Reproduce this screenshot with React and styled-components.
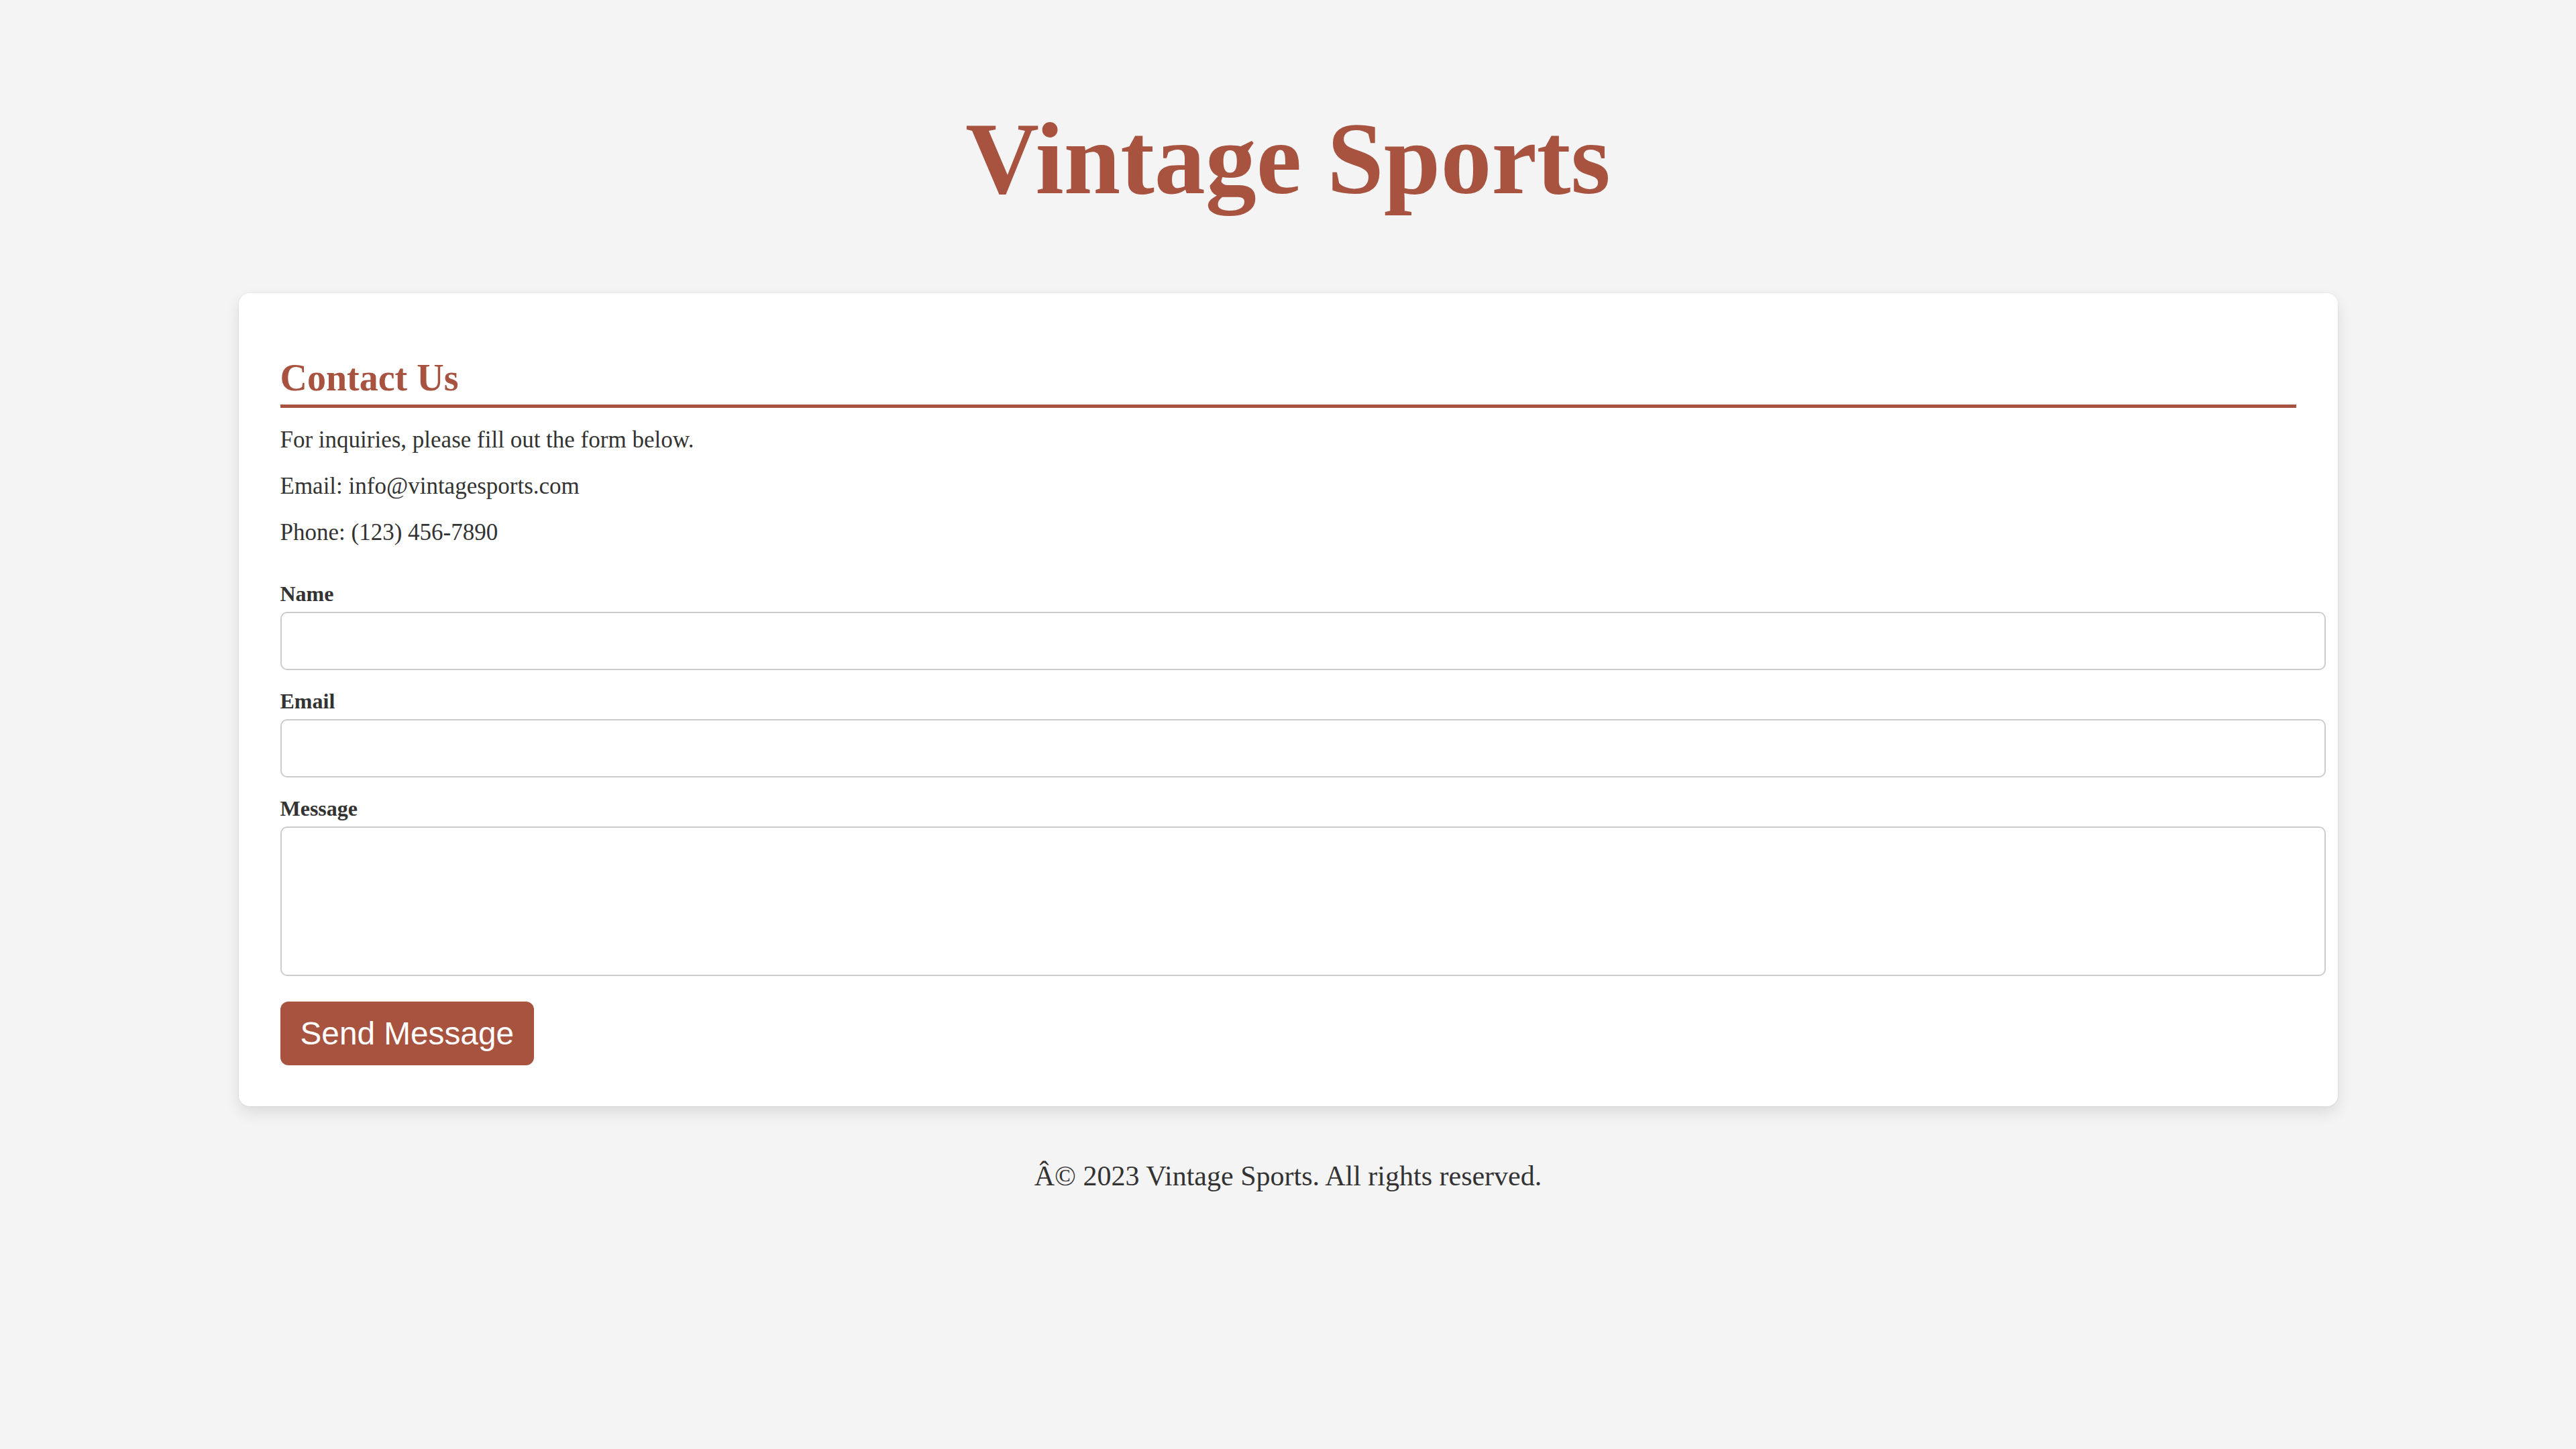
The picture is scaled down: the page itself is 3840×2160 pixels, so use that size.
import React from "react";
import styled, { createGlobalStyle } from "styled-components";

const GlobalStyle = createGlobalStyle`
	html,
	body {
		margin: 0;
		padding: 0;
		background: #f4f4f4;
	}

	body {
		font-family: "Liberation Serif", "Times New Roman", serif;
		color: #333;
	}
`;

const Page = styled.div`
	min-height: 2160px;
	padding-top: 161px;
	box-sizing: border-box;
`;

const Title = styled.h1`
	margin: 0;
	font-size: 152px;
	line-height: 152px;
	font-weight: 700;
	color: #a75340;
	text-align: center;
`;

const Card = styled.main`
	display: flex;
	flex-direction: column;
	width: 3129px;
	box-sizing: border-box;
	margin: 124px auto 0;
	padding: 62px 62px 61px;
	background: #fff;
	border-radius: 16px;
	box-shadow: 0 10px 22px rgba(0, 0, 0, 0.1), 0 0 3px rgba(0, 0, 0, 0.08);
`;

const SectionTitle = styled.h2`
	margin: 32px 0 29px;
	padding-bottom: 8px;
	font-size: 56px;
	line-height: 64px;
	font-weight: 700;
	color: #a75340;
	border-bottom: 5px solid #a75340;
`;

const Text = styled.p`
	margin: 0 0 31px;
	font-size: 35px;
	line-height: 38px;
`;

const Form = styled.form`
	display: block;
	margin-top: 23px;
`;

const Label = styled.label`
	display: block;
	margin-bottom: 9px;
	font-size: 32px;
	line-height: 36px;
	font-weight: 700;
	color: #333;
`;

const fieldStyles = `
	display: block;
	width: 100%;
	box-sizing: content-box;
	margin: 0 0 28px;
	padding: 20px;
	border: 2px solid #ccc;
	border-radius: 10px;
	background: #fff;
	font-family: "Liberation Serif", serif;
	font-size: 35px;
	color: #333;
	outline: none;
`;

const Input = styled.input`
	${fieldStyles}
	height: 43px;
`;

const TextArea = styled.textarea`
	${fieldStyles}
	height: 179px;
	margin-bottom: 38px;
	resize: none;
`;

const SubmitButton = styled.button`
	display: block;
	height: 95px;
	padding: 0 30px;
	border: none;
	border-radius: 12px;
	background: #a75340;
	color: #fff;
	font-family: "Liberation Sans", Arial, sans-serif;
	font-size: 47.75px;
	cursor: pointer;
`;

const Footer = styled.footer`
	margin-top: 80px;
	font-size: 42px;
	line-height: 48px;
	text-align: center;
	color: #333;
`;

export default function App() {
	return (
		<>
			<GlobalStyle />
			<Page>
				<Title>Vintage Sports</Title>
				<Card>
					<SectionTitle>Contact Us</SectionTitle>
					<Text>For inquiries, please fill out the form below.</Text>
					<Text>Email: info@vintagesports.com</Text>
					<Text>Phone: (123) 456-7890</Text>
					<Form onSubmit={(e) => e.preventDefault()}>
						<Label htmlFor="name">Name</Label>
						<Input id="name" type="text" />
						<Label htmlFor="email">Email</Label>
						<Input id="email" type="email" />
						<Label htmlFor="message">Message</Label>
						<TextArea id="message" />
						<SubmitButton type="submit">Send Message</SubmitButton>
					</Form>
				</Card>
				<Footer>Â© 2023 Vintage Sports. All rights reserved.</Footer>
			</Page>
		</>
	);
}
